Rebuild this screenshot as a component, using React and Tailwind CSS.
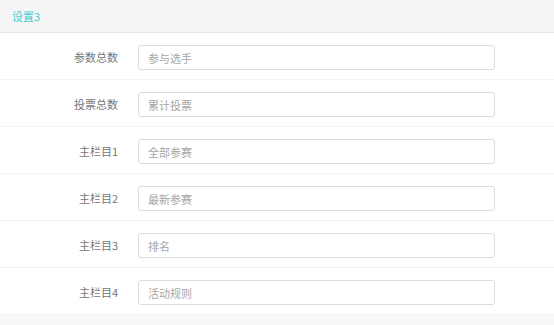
const FIELDS = [
  { label: '参数总数', placeholder: '参与选手' },
  { label: '投票总数', placeholder: '累计投票' },
  { label: '主栏目1', placeholder: '全部参赛' },
  { label: '主栏目2', placeholder: '最新参赛' },
  { label: '主栏目3', placeholder: '排名' },
  { label: '主栏目4', placeholder: '活动规则' },
]

function FieldRow({ label, placeholder }) {
  return (
    <div className="flex items-center pt-3 pb-[9px] border-b border-[#f4f4f6]">
      <label className="w-[118px] shrink-0 text-right text-[11px] text-[#777]">
        {label}
      </label>
      <input
        type="text"
        placeholder={placeholder}
        className="ml-5 w-[357px] h-[25px] px-[9px] rounded-[3px] border border-[#dcdcdc] bg-white text-[11px] text-[#333] placeholder:text-[#a6a6a6] outline-none"
      />
    </div>
  )
}

export default function App() {
  return (
    <div
      className="w-[554px] h-[325px] bg-[#f7f8fa]"
      style={{ fontFamily: '"Noto Sans CJK SC", "Noto Sans", sans-serif' }}
    >
      <div className="bg-white">
        {/* header */}
        <div className="h-[33px] bg-[#f5f5f5] border-b border-[#e6e6e6] flex items-center px-3">
          <span className="text-[11px] text-[#45cbd3]">设置3</span>
        </div>

        {FIELDS.map(f => (
          <FieldRow key={f.label} label={f.label} placeholder={f.placeholder} />
        ))}
      </div>
    </div>
  )
}
